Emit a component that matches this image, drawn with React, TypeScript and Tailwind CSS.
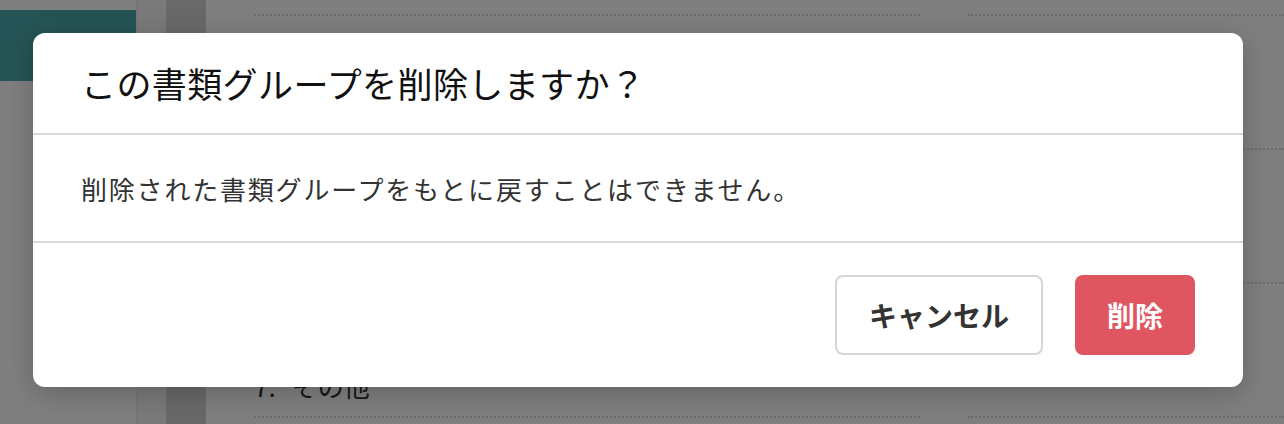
import React from 'react'

const rows = [
  { num: '', label: '' },
  { num: '', label: '' },
  { num: '', label: '' },
  { num: '7.', label: 'その他' },
]

export default function App() {
  return (
    <div
      className="relative w-[1284px] h-[424px] overflow-hidden bg-[#7f7f7f]"
      style={{ fontFamily: '"Noto Sans CJK JP", "Noto Sans", sans-serif' }}
    >
      {/* Page behind the overlay */}
      <div className="flex h-full">
        {/* Sidebar */}
        <div className="w-[138px] flex-shrink-0 border-r-2 border-[#777777] pt-[10px]">
          <div className="h-[71px] bg-[#265456]" />
        </div>
        <div className="w-[28px] flex-shrink-0 bg-[#7a7a7a]" />
        <div className="w-[40px] flex-shrink-0 bg-[#696969]" />

        {/* Main list */}
        <div className="flex-1 pl-12 -mt-[118px]">
          {rows.map((row, i) => (
            <div key={i} className="grid grid-cols-[666px_1fr] gap-12 h-[134px]">
              <div className="border-b-2 border-dotted border-[#6b6b6b] flex items-end gap-4 pb-[11px] text-[26px] text-[#161616]">
                {row.num && <span>{row.num}</span>}
                {row.label && <span>{row.label}</span>}
              </div>
              <div className="border-b-2 border-dotted border-[#6b6b6b]" />
            </div>
          ))}
        </div>
      </div>

      {/* Dialog */}
      <div className="absolute left-[33px] top-[33px] w-[1210px] bg-white rounded-[12px] shadow-[0_6px_28px_rgba(0,0,0,0.22)]">
        <div className="h-[102px] flex items-center px-12 border-b-2 border-[#d9d9d9]">
          <h2 className="text-[35px] font-normal text-[#111111] tracking-[0.4px]">
            この書類グループを削除しますか？
          </h2>
        </div>
        <div className="h-[108px] flex items-center px-12 border-b-2 border-[#d9d9d9]">
          <p className="text-[26px] text-[#333333] tracking-[1.8px]">
            削除された書類グループをもとに戻すことはできません。
          </p>
        </div>
        <div className="flex justify-end gap-8 pt-[32px] pb-[32px] pr-12">
          <button className="w-[208px] h-[80px] rounded-[8px] border-2 border-[#d6d6d6] bg-white text-[28px] font-bold text-[#333333]">
            キャンセル
          </button>
          <button className="w-[120px] h-[80px] rounded-[8px] bg-[#e05660] text-[28px] font-bold text-white">
            削除
          </button>
        </div>
      </div>
    </div>
  )
}
